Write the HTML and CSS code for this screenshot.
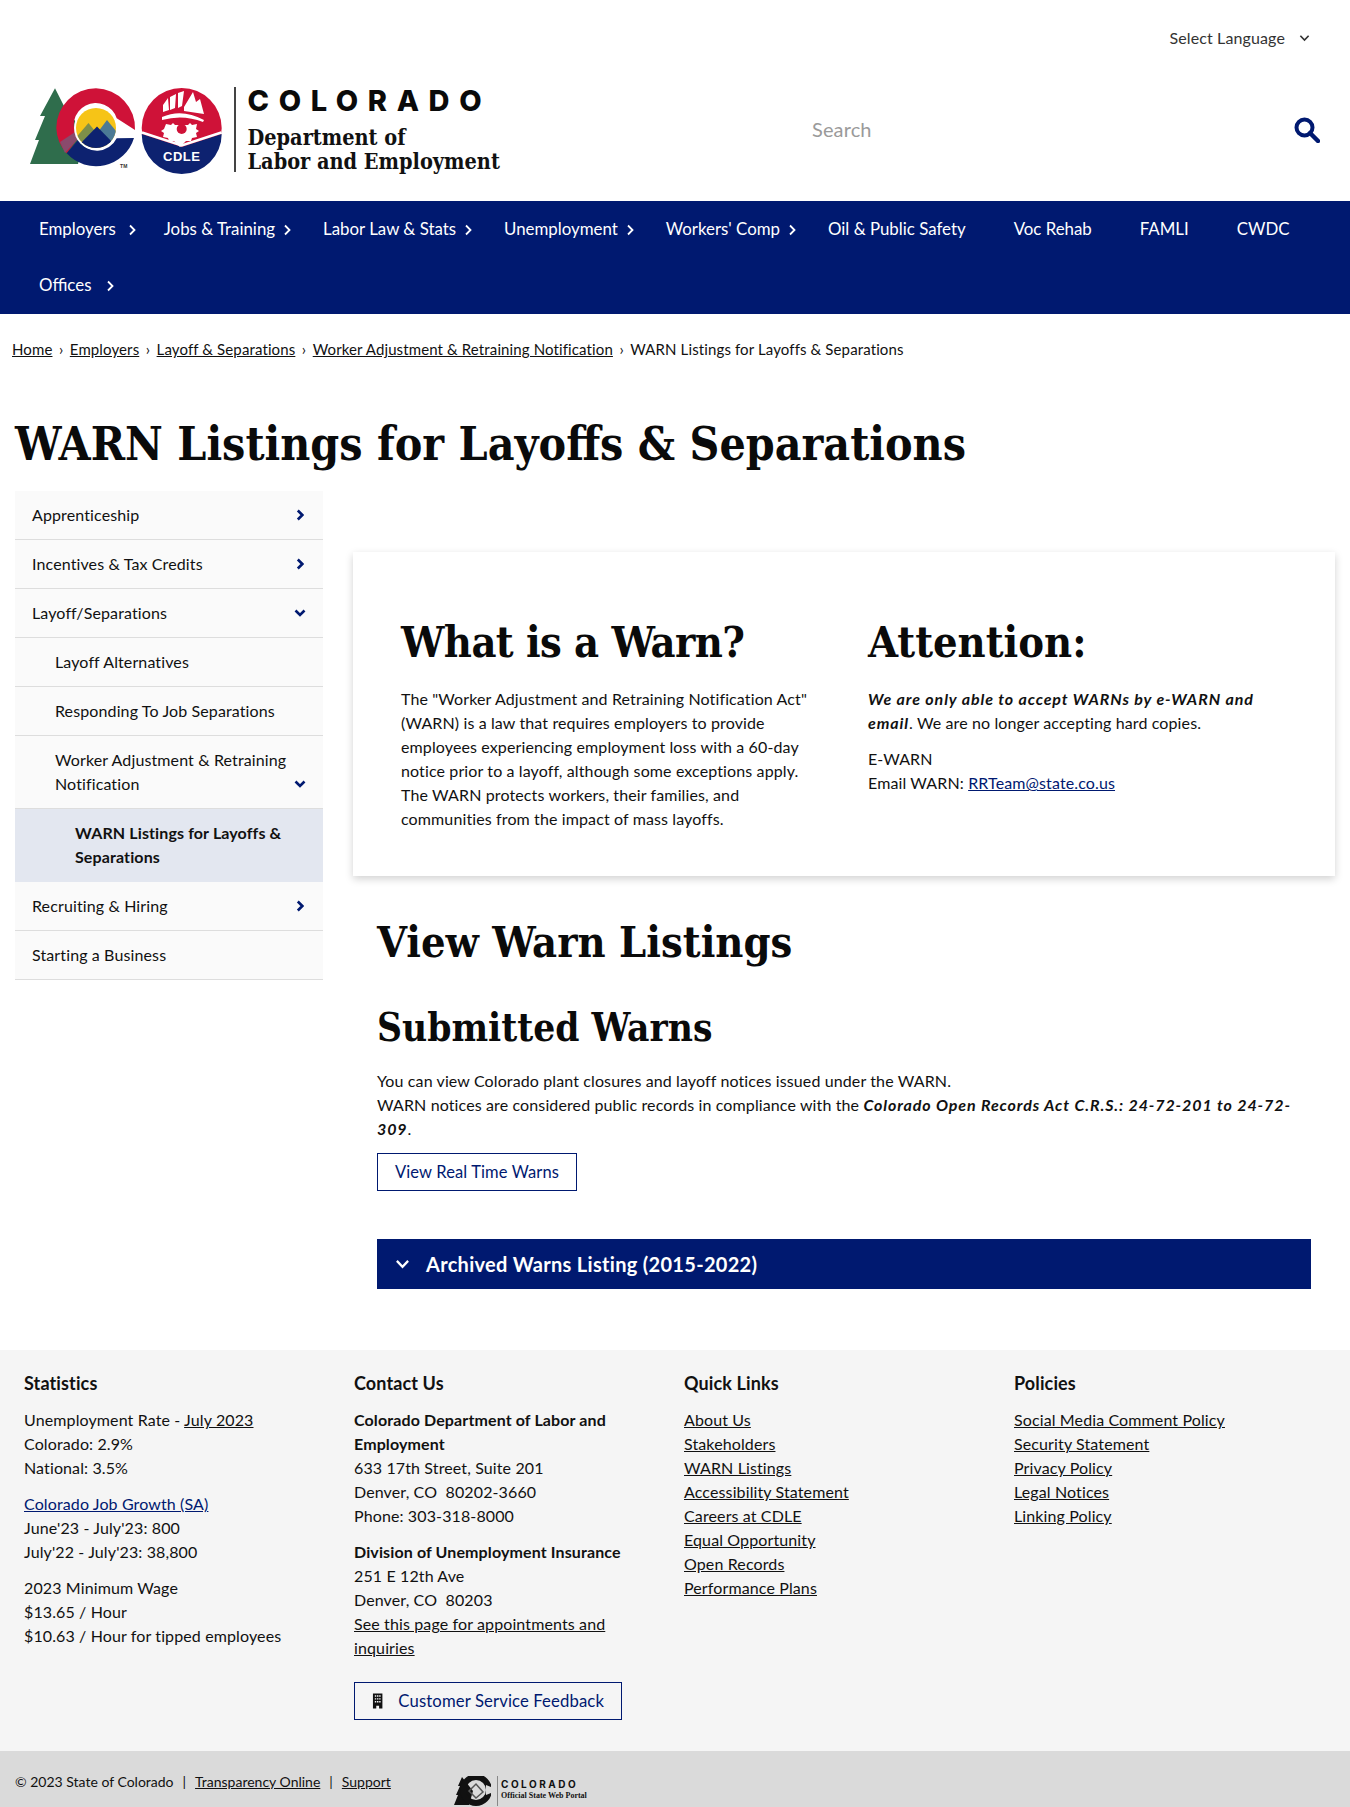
FILE: index.html
```html
<!DOCTYPE html>
<html lang="en">
<head>
<meta charset="utf-8">
<title>WARN Listings for Layoffs &amp; Separations</title>
<link rel="stylesheet" href="styles.css">
</head>
<body>
<svg class="defs" width="0" height="0" aria-hidden="true">
  <symbol id="chev-r" viewBox="0 0 8 12"><path d="M2 1.5 6.5 6 2 10.5" fill="none" stroke="currentColor" stroke-width="1.8"/></symbol>
  <symbol id="chev-d" viewBox="0 0 12 8"><path d="M1.5 1.5 6 6.2l4.5-4.700" fill="none" stroke="currentColor" stroke-width="1.8"/></symbol>
  <symbol id="chev-rb" viewBox="0 0 8 12"><path d="M1.800 1.500 6.300 6 1.800 10.500" fill="none" stroke="currentColor" stroke-width="2.600"/></symbol>
  <symbol id="chev-db" viewBox="0 0 12 8"><path d="M1.500 1.500 6 6l4.500-4.500" fill="none" stroke="currentColor" stroke-width="2.600"/></symbol>
</svg>

<header class="site-header">
  <div class="lang-row">
    <span class="lang">Select Language</span>
    <svg class="lang-chev"><use href="#chev-d"/></svg>
  </div>
  <div class="brand-row">
    <a class="brand">
      <svg class="brand-mark" viewBox="0 0 220 100" width="220" height="100">
        <defs><clipPath id="sun"><circle cx="76" cy="48" r="20"/></clipPath></defs>
        <path d="M35 8.300 20 36h5L15 60h4L10 84h48l8-30-20-24z" fill="#2f6d4c"/>
        <path d="M115 50A39.700 39.700 0 0 0 76 8.300 39.700 39.700 0 0 0 36.300 48 39.700 39.700 0 0 0 46.700 73.300L58 58A22 22 0 1 1 96.700 38.300z" fill="#cf1238"/>
        <path d="M114 58A39.700 39.700 0 0 1 46.700 73.300L58 60A22 22 0 0 0 96.700 58.300z" fill="#0d2270"/>
        <path d="M40 62 55 52l3 7-13 14z" fill="#8a4a6c"/>
        <circle cx="76" cy="48" r="22" fill="#fff"/>
        <g clip-path="url(#sun)">
          <rect x="54" y="26" width="44" height="44" fill="#f6c417"/>
          <path d="M52 62 68.500 43 82 60z" fill="#7e8f49"/>
          <path d="M72 60 87 40 100 56v10z" fill="#4c7a95"/>
          <path d="M54 70 77 46.500 100 70z" fill="#0d2270"/>
        </g>
        <text x="100" y="88" class="tm">TM</text>
        <circle cx="161.700" cy="48" r="40" fill="#cf1238"/>
        <path d="M121.700 54 161.700 67 201.700 54A40 40 0 0 1 121.700 54z" fill="#0d2270"/>
        <path d="M122 52.500 161.700 65.500 201.400 52.500" fill="none" stroke="#fff" stroke-width="2.500"/>
        <path d="M143 25l5-7 1 12-6 2zM150 17l6-3-1 14-5 2zM158 13l6-2-2 15-4 2zM164 27l9-15 3 10 4-3 4 15-20-3z" fill="#fff"/>
        <path d="M142 37q20-9 42 3l-1 2q-20-8-41-2z" fill="#fff"/>
        <path d="M146 44l5 1 2-2 2 2h13l2-2 2 2 5-1-1 5 3 2-3 2 1 4-5 1-1 3-5 0-6 6-6-6-5 0-1-3-5-1 1-4-3-2 3-2z" fill="#fff"/>
        <circle cx="161.700" cy="49" r="5" fill="#cf1238"/>
        <text x="161.700" y="81" class="cdle">CDLE</text>
      </svg>
      <span class="brand-rule"></span>
      <span class="brand-text">
        <span class="brand-state">COLORADO</span>
        <span class="brand-dept">Department of<br>Labor and Employment</span>
      </span>
    </a>
    <div class="search">
      <span class="search-hint">Search</span>
      <svg class="search-icon" viewBox="0 0 26 26" width="26" height="26"><circle cx="10.500" cy="10.500" r="8" fill="none" stroke="currentColor" stroke-width="4"/><path d="M16 16l8 8" stroke="currentColor" stroke-width="4.500" stroke-linecap="round"/></svg>
    </div>
  </div>
</header>

<nav class="main-nav">
  <a class="nav-item">Employers<svg class="nav-chev chev-near"><use href="#chev-r"/></svg></a>
  <a class="nav-item">Jobs &amp; Training<svg class="nav-chev"><use href="#chev-r"/></svg></a>
  <a class="nav-item">Labor Law &amp; Stats<svg class="nav-chev"><use href="#chev-r"/></svg></a>
  <a class="nav-item">Unemployment<svg class="nav-chev"><use href="#chev-r"/></svg></a>
  <a class="nav-item">Workers' Comp<svg class="nav-chev"><use href="#chev-r"/></svg></a>
  <a class="nav-item">Oil &amp; Public Safety</a>
  <a class="nav-item">Voc Rehab</a>
  <a class="nav-item">FAMLI</a>
  <a class="nav-item">CWDC</a>
  <a class="nav-item nav-break">Offices<svg class="nav-chev chev-far"><use href="#chev-r"/></svg></a>
</nav>

<div class="crumbs">
  <a>Home</a><span class="sep">›</span><a>Employers</a><span class="sep">›</span><a>Layoff &amp; Separations</a><span class="sep">›</span><a>Worker Adjustment &amp; Retraining Notification</a><span class="sep">›</span><span>WARN Listings for Layoffs &amp; Separations</span>
</div>

<h1 class="page-title">WARN Listings for Layoffs &amp; Separations</h1>

<div class="layout">
  <aside class="side">
    <a class="side-row"><span>Apprenticeship</span><svg class="side-chev-r"><use href="#chev-rb"/></svg></a>
    <a class="side-row"><span>Incentives &amp; Tax Credits</span><svg class="side-chev-r"><use href="#chev-rb"/></svg></a>
    <a class="side-row"><span>Layoff/Separations</span><svg class="side-chev-d"><use href="#chev-db"/></svg></a>
    <a class="side-row sub"><span>Layoff Alternatives</span></a>
    <a class="side-row sub"><span>Responding To Job Separations</span></a>
    <a class="side-row sub"><span>Worker Adjustment &amp; Retraining Notification</span><svg class="side-chev-d"><use href="#chev-db"/></svg></a>
    <a class="side-row current"><span>WARN Listings for Layoffs &amp; Separations</span></a>
    <a class="side-row"><span>Recruiting &amp; Hiring</span><svg class="side-chev-r"><use href="#chev-rb"/></svg></a>
    <a class="side-row"><span>Starting a Business</span></a>
  </aside>

  <main class="content">
    <section class="card">
      <div>
        <h2 class="h-lg card-head tight">What is a Warn?</h2>
        <p>The "Worker Adjustment and Retraining Notification Act" (WARN) is a law that requires employers to provide employees experiencing employment loss with a 60-day notice prior to a layoff, although some exceptions apply. The WARN protects workers, their families, and communities from the impact of mass layoffs.</p>
      </div>
      <div>
        <h2 class="h-lg card-head">Attention:</h2>
        <p><strong class="emph"><em>We are only able to accept WARNs by e-WARN and email</em></strong>. We are no longer accepting hard copies.</p>
        <p>E-WARN<br>Email WARN: <a class="link">RRTeam@state.co.us</a></p>
      </div>
    </section>
    <section class="listings">
      <h2 class="h-lg">View Warn Listings</h2>
      <h3 class="h-md">Submitted Warns</h3>
      <p>You can view Colorado plant closures and layoff notices issued under the WARN.<br>WARN notices are considered public records in compliance with the <strong class="emph"><em>Colorado Open Records Act C.R.S.: 24-72-201 to 24-72-309</em></strong>.</p>
      <a class="btn">View Real Time Warns</a>
      <div class="accordion">
        <svg class="acc-chev"><use href="#chev-d"/></svg>
        <span>Archived Warns Listing (2015-2022)</span>
      </div>
    </section>
  </main>
</div>

<footer class="site-footer">
  <div class="foot-cols">
    <div class="foot-col">
      <h4>Statistics</h4>
      <p>Unemployment Rate - <a class="u">July 2023</a><br>Colorado: 2.9%<br>National: 3.5%</p>
      <p><a class="link">Colorado Job Growth (SA)</a><br>June'23 - July'23: 800<br>July'22 - July'23: 38,800</p>
      <p>2023 Minimum Wage<br>$13.65 / Hour<br>$10.63 / Hour for tipped employees</p>
    </div>
    <div class="foot-col">
      <h4>Contact Us</h4>
      <p><b>Colorado Department of Labor and Employment</b><br>633 17th Street, Suite 201<br>Denver, CO&nbsp; 80202-3660<br>Phone: 303-318-8000</p>
      <p><b>Division of Unemployment Insurance</b><br>251 E 12th Ave<br>Denver, CO&nbsp; 80203<br><a class="u">See this page for appointments and inquiries</a></p>
      <a class="btn btn-icon">
        <svg viewBox="0 0 12 16" width="12" height="16"><path d="M1 0h10v16H7.500v-3h-3v3H1z" fill="#111"/><path d="M3 2h1.500v1.500H3zM5.300 2h1.500v1.500H5.300zM7.600 2h1.500v1.500H7.600zM3 5h1.500v1.500H3zM5.300 5h1.500v1.500H5.300zM7.600 5h1.500v1.500H7.600zM3 8h1.500v1.500H3zM5.300 8h1.500v1.500H5.300zM7.600 8h1.500v1.500H7.600z" fill="#f5f5f5"/></svg>
        <span>Customer Service Feedback</span>
      </a>
    </div>
    <div class="foot-col">
      <h4>Quick Links</h4>
      <p class="link-list"><a class="u">About Us</a><a class="u">Stakeholders</a><a class="u">WARN Listings</a><a class="u">Accessibility Statement</a><a class="u">Careers at CDLE</a><a class="u">Equal Opportunity</a><a class="u">Open Records</a><a class="u">Performance Plans</a></p>
    </div>
    <div class="foot-col">
      <h4>Policies</h4>
      <p class="link-list"><a class="u">Social Media Comment Policy</a><a class="u">Security Statement</a><a class="u">Privacy Policy</a><a class="u">Legal Notices</a><a class="u">Linking Policy</a></p>
    </div>
  </div>
  <div class="foot-bar">
    <div class="foot-legal">© 2023 State of Colorado<span class="bar-sep">|</span><a class="u">Transparency Online</a><span class="bar-sep">|</span><a class="u">Support</a></div>
    <div class="foot-brand">
      <svg viewBox="0 0 38 30" width="38" height="30">
        <path d="M9 1 5 10h2L3 19h2L1 29h15l4-14z" fill="#111"/>
        <circle cx="23" cy="14" r="13" fill="none" stroke="#111" stroke-width="6"/>
        <path d="M16 15l7-7 7 8-7 6z" fill="none" stroke="#555" stroke-width="1.500"/>
        <path d="M33 9l5 2v6l-5 2z" fill="#dadada"/>
      </svg>
      <span class="foot-brand-text"><span class="fb-state">COLORADO</span><span class="fb-sub">Official State Web Portal</span></span>
    </div>
  </div>
</footer>
</body>
</html>
```
FILE: styles.css
```css
* { box-sizing: border-box; }
html, body { margin: 0; padding: 0; }
body {
  font-family: "Lato", "Open Sans", sans-serif;
  font-size: 16px;
  line-height: 24px;
  letter-spacing: .12px;
  color: #111;
  background: #fff;
  height: 1807px;
  overflow: hidden;
}
p { margin: 0 0 12px; }
a { color: inherit; }
.defs { position: absolute; }
.u { text-decoration: underline; }
.link { color: #001970; text-decoration: underline; }
.emph { letter-spacing: .9px; }

/* header */
.site-header { height: 201px; }
.lang-row {
  height: 76px;
  display: flex;
  align-items: center;
  justify-content: flex-end;
  padding-right: 40px;
  color: #333;
}
.lang-chev { width: 11px; height: 8px; margin-left: 14px; }
.brand-row {
  height: 125px;
  display: flex;
  align-items: flex-start;
  justify-content: space-between;
  padding: 4px 30px 0 20px;
}
.brand { display: flex; align-items: flex-start; }
.brand-mark { flex: none; }
.tm { font: 700 5px "Liberation Sans", sans-serif; fill: #333; }
.cdle { font: 700 13px "Liberation Sans", sans-serif; fill: #fff; text-anchor: middle; letter-spacing: .5px; }
.brand-rule { width: 1.500px; height: 85px; background: #444; margin: 7px 0 0 -6px; }
.brand-text { display: flex; flex-direction: column; margin: 6px 0 0 12px; }
.brand-state {
  font: 800 29px/30px "Inter", sans-serif;
  letter-spacing: 9.600px;
  color: #0a0a0a;
}
.brand-dept {
  font: 700 21.500px/24px "DejaVu Serif Condensed", "DejaVu Serif", serif;
  letter-spacing: 0;
  color: #111;
  margin-top: 10px;
}
.search { width: 508px; display: flex; align-items: center; justify-content: space-between; height: 48px; margin-top: 26px; }
.search-hint { font-size: 20px; color: #9a9a9a; margin-top: -2px; }
.search-icon { color: #001970; }

/* nav */
.main-nav {
  height: 113px;
  background: #001970;
  color: #fff;
  display: flex;
  flex-wrap: wrap;
  align-content: flex-start;
  padding-left: 15px;
  font-size: 16.850px;
  letter-spacing: 0;
}
.nav-item {
  position: relative;
  height: 56px;
  line-height: 56px;
  padding: 0 24px;
}
.nav-chev { position: absolute; right: 8px; top: 23px; width: 8px; height: 12px; }
.chev-near { right: 4px; }
.chev-far { right: 1px; }
.nav-item.nav-break { margin-right: 1000px; }

/* breadcrumb */
.crumbs { font-size: 15px; line-height: 24px; padding: 23px 12px 0; height: 60px; }
.crumbs a { text-decoration: underline; }
.sep { margin: 0 6.500px; }

/* headings */
.page-title, .h-lg, .h-md, .card-head {
  font-family: "DejaVu Serif Condensed", "DejaVu Serif", serif;
  font-weight: 700;
  letter-spacing: 0;
  color: #0a0a0a;
  margin: 0;
}
.page-title { font-size: 46px; line-height: 56px; padding: 42px 15px 0; height: 116px; }
.h-lg { font-size: 43px; line-height: 48px; }
.h-lg.tight { letter-spacing: -.6px; }
.h-md { font-size: 38.500px; line-height: 44px; margin-top: 40px; margin-bottom: 19px; }

/* layout */
.layout { display: flex; align-items: flex-start; padding: 0 15px; height: 860px; }
.side { width: 308px; flex: none; margin-top: 1px; }
.side-row {
  display: flex;
  align-items: flex-end;
  justify-content: space-between;
  background: #fafafa;
  border-bottom: 1px solid #ddd;
  padding: 12px 17px;
}
.side-row.sub { padding-left: 40px; }
.side-row.current { background: #e3e7f0; padding: 12px 30px 12px 60px; font-weight: 700; border-bottom-color: #e3e7f0; }
.side-chev-r { flex: none; width: 8px; height: 12px; color: #001970; margin: 0 2px 6px 8px; }
.side-chev-d { flex: none; width: 12px; height: 8px; color: #001970; margin: 0 0 8px -12px; }

.content { margin-left: 30px; width: 982px; flex: none; padding-top: 62px; }
.card {
  height: 324px;
  display: grid;
  grid-template-columns: 425px 419px;
  column-gap: 42px;
  padding: 66px 48px 0 48px;
  background: #fff;
  box-shadow: 0 3px 8px rgba(0, 0, 0, .18);
}
.card-head { margin-bottom: 21px; }
.listings { padding: 42px 24px 0 24px; }
.btn {
  display: inline-flex;
  align-items: center;
  height: 38px;
  padding: 0 17px;
  border: 1px solid #001970;
  color: #001970;
  background: #fff;
  white-space: nowrap;
  font-size: 16.500px;
}
.accordion {
  margin-top: 48px;
  height: 50px;
  background: #001970;
  color: #fff;
  display: flex;
  align-items: center;
  font-size: 20px;
  letter-spacing: .3px;
  font-weight: 700;
  padding-left: 18px;
}
.acc-chev { width: 15px; height: 10px; margin-right: 16px; }

/* footer */
.site-footer { background: #f5f5f5; }
.foot-cols {
  height: 401px;
  display: grid;
  grid-template-columns: repeat(4, 330px);
  padding: 21px 24px 0;
}
.foot-col { padding-right: 30px; }
.foot-col h4 { font-size: 18px; line-height: 24px; font-weight: 700; margin: 0 0 13px; }
.link-list a { display: block; }
.btn-icon { height: 38px; width: 268px; padding-left: 17px; margin-top: 10px; background: transparent; font-size: 16.700px; }
.btn-icon svg { margin-right: 15px; }
.foot-bar {
  height: 56px;
  background: #dadada;
  display: flex;
  align-items: flex-start;
  font-size: 14px;
  letter-spacing: 0;
  padding: 19px 0 0 15px;
  overflow: hidden;
}
.foot-legal { width: 438px; }
.bar-sep { margin: 0 9px; }
.foot-brand { display: flex; margin-top: 6px; }
.foot-brand-text { display: flex; flex-direction: column; border-left: 1px solid #888; margin-left: 6px; padding-left: 3px; }
.fb-state { font: 700 10px/12px "Inter", sans-serif; letter-spacing: 2.500px; margin-top: 2px; }
.fb-sub { font: 700 8px/12px "Liberation Serif", serif; }
```
